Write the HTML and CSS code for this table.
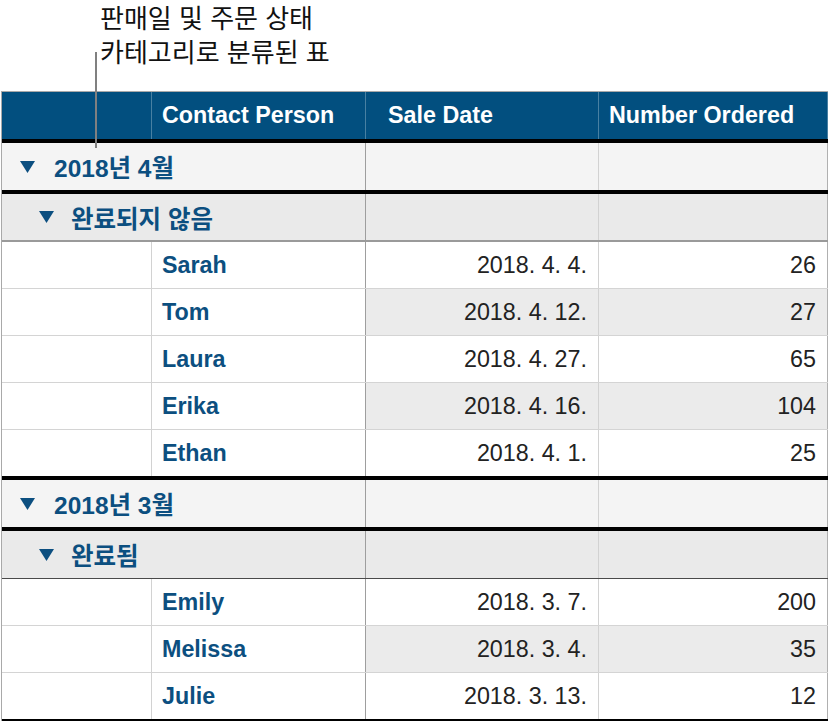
FILE: index.html
```html
<!DOCTYPE html>
<html lang="ko">
<head>
<meta charset="utf-8">
<link rel="stylesheet" href="styles.css">
</head>
<body>
<div class="caption">
  <p class="caption-text">판매일 및 주문 상태<br>카테고리로 분류된 표</p>
  <span class="leader"></span>
</div>
<div class="sheet">
  <div class="row head">
    <div class="cell c1"></div>
    <div class="cell c2 hpad">Contact Person</div>
    <div class="cell c3 hpad-date">Sale Date</div>
    <div class="cell c4 hpad">Number Ordered</div>
  </div>

  <div class="row group">
    <div class="cell c12 g1"><svg class="tri" viewBox="0 0 15 12"><polygon points="0,0 15,0 7.5,12"/></svg>2018년 4월</div>
    <div class="cell c3"></div>
    <div class="cell c4"></div>
  </div>
  <div class="row sub sub-a">
    <div class="cell c12 g2"><svg class="tri" viewBox="0 0 15 12"><polygon points="0,0 15,0 7.5,12"/></svg>완료되지 않음</div>
    <div class="cell c3"></div>
    <div class="cell c4"></div>
  </div>
  <div class="row data">
    <div class="cell c1"></div><div class="cell c2 name">Sarah</div>
    <div class="cell c3 num">2018. 4. 4.</div><div class="cell c4 num">26</div>
  </div>
  <div class="row data alt">
    <div class="cell c1"></div><div class="cell c2 name">Tom</div>
    <div class="cell c3 num">2018. 4. 12.</div><div class="cell c4 num">27</div>
  </div>
  <div class="row data">
    <div class="cell c1"></div><div class="cell c2 name">Laura</div>
    <div class="cell c3 num">2018. 4. 27.</div><div class="cell c4 num">65</div>
  </div>
  <div class="row data alt">
    <div class="cell c1"></div><div class="cell c2 name">Erika</div>
    <div class="cell c3 num">2018. 4. 16.</div><div class="cell c4 num">104</div>
  </div>
  <div class="row data last">
    <div class="cell c1"></div><div class="cell c2 name">Ethan</div>
    <div class="cell c3 num">2018. 4. 1.</div><div class="cell c4 num">25</div>
  </div>

  <div class="row group">
    <div class="cell c12 g1"><svg class="tri" viewBox="0 0 15 12"><polygon points="0,0 15,0 7.5,12"/></svg>2018년 3월</div>
    <div class="cell c3"></div>
    <div class="cell c4"></div>
  </div>
  <div class="row sub sub-b">
    <div class="cell c12 g2"><svg class="tri" viewBox="0 0 15 12"><polygon points="0,0 15,0 7.5,12"/></svg>완료됨</div>
    <div class="cell c3"></div>
    <div class="cell c4"></div>
  </div>
  <div class="row data">
    <div class="cell c1"></div><div class="cell c2 name">Emily</div>
    <div class="cell c3 num">2018. 3. 7.</div><div class="cell c4 num">200</div>
  </div>
  <div class="row data alt">
    <div class="cell c1"></div><div class="cell c2 name">Melissa</div>
    <div class="cell c3 num">2018. 3. 4.</div><div class="cell c4 num">35</div>
  </div>
  <div class="row data last">
    <div class="cell c1"></div><div class="cell c2 name">Julie</div>
    <div class="cell c3 num">2018. 3. 13.</div><div class="cell c4 num">12</div>
  </div>
</div>
</body>
</html>
```
FILE: styles.css
```css
body {
  margin: 0;
  background: #ffffff;
  font-family: "Liberation Sans", "Noto Sans CJK KR", sans-serif;
}

.caption {
  position: relative;
  box-sizing: border-box;
  height: 91px;
  padding-left: 100px;
  padding-top: 2px;
}

.caption-text {
  margin: 0;
  font-family: "Liberation Sans", "Noto Sans CJK KR", sans-serif;
  font-size: 26px;
  line-height: 34px;
  color: #111111;
}

.leader {
  position: absolute;
  left: 95px;
  top: 52px;
  width: 2px;
  height: 96px;
  background: #808080;
  z-index: 2;
}

.sheet {
  margin-left: 1px;
  border-left: 1px solid #a9a9a9;
  border-top: 1px solid #a9a9a9;
  width: 826px;
}

.row {
  display: grid;
  grid-template-columns: 150px 214px 233px 229px;
  height: 46px;
  border-bottom: 1px solid #d4d4d4;
}

.cell {
  box-sizing: border-box;
  display: flex;
  align-items: center;
  border-right: 1px solid #d2d2d2;
  font-size: 23.3px;
  white-space: nowrap;
}

.c2, .c12 {
  border-right-color: #9e9e9e;
}

.c12 {
  grid-column: span 2;
}

.c4 {
  border-right-color: #b0b0b0;
}

/* header */
.head {
  height: 47px;
  background: #024f7f;
  border-bottom: 4px solid #000000;
  color: #ffffff;
  font-weight: bold;
}

.head .cell {
  border-right-color: rgba(255, 255, 255, 0.28);
}

.hpad {
  padding-left: 10px;
}

.hpad-date {
  padding-left: 22px;
}

/* groups */
.group {
  height: 47px;
  background: #f4f4f4;
  border-bottom: 4px solid #000000;
}

.sub {
  height: 46px;
  background: #eaeaea;
}

.sub-a {
  border-bottom: 2px solid #9a9a9a;
}

.sub-b {
  height: 47px;
  border-bottom: 1px solid #4a4a4a;
}

.g1, .g2 {
  color: #0c4f80;
  font-weight: bold;
  font-size: 24.5px;
}

.g1 {
  padding-left: 18px;
}

.g2 {
  padding-left: 37px;
}

.tri {
  width: 15px;
  height: 12px;
  margin-right: 19px;
  fill: #0c4f80;
  flex: none;
}

.g2 .tri {
  margin-right: 17px;
}

/* data */
.data {
  background: #ffffff;
}

.data.last {
  border-bottom: 4px solid #000000;
}

.alt .c3,
.alt .c4 {
  background: #ebebeb;
}

.name {
  padding-left: 10px;
  color: #0c4f80;
  font-weight: bold;
}

.num {
  justify-content: flex-end;
  padding-right: 11px;
  color: #222222;
}
```
